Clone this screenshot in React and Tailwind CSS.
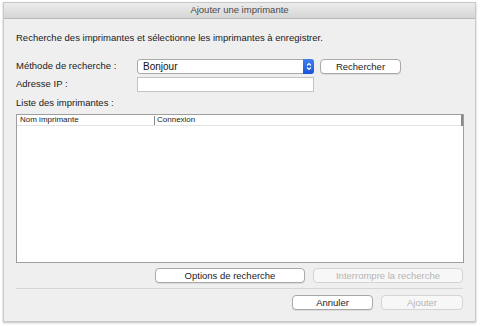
import React from 'react';

const Btn = ({ children, disabled, className = '' }) => (
    <div
        className={`h-[15px] flex items-center justify-center rounded-[4px] border text-[9.5px] leading-none ${
            disabled ? 'border-[#d4d4d4] bg-[#f7f7f7] text-[#b5b5b5]' : 'border-[#a9a9a9] bg-white text-[#222] shadow-[0_1px_0_rgba(0,0,0,0.08)]'
        } ${className}`}
    >
        {children}
    </div>
);

export default function App() {
    return (
        <div className="w-[480px] h-[326px] bg-white pt-[2px] pl-[3px] pr-[4px] pb-[4px]" style={{ fontFamily: '"Liberation Sans", Arial, sans-serif' }}>
            <div className="h-full flex flex-col border border-[#c8c8c8] bg-[#efefef] shadow-[0_1px_2px_rgba(0,0,0,0.25)]">
                {/* barre de titre */}
                <div className="h-[16px] flex items-center justify-center bg-gradient-to-b from-[#ececec] to-[#d6d6d6] border-b border-[#b9b9b9] text-[9.5px] text-[#4a4a4a]">
                    Ajouter une imprimante
                </div>

                <div className="flex-1 flex flex-col px-[12px]">
                    <div className="mt-[12px] h-[14px] flex items-center text-[9.5px] text-[#1a1a1a]">
                        Recherche des imprimantes et sélectionne les imprimantes à enregistrer.
                    </div>

                    <div className="mt-[14px] flex items-center">
                        <div className="w-[121px] text-[9.5px] text-[#1a1a1a]">Méthode de recherche :</div>
                        <div className="w-[177px] h-[15px] flex items-center border border-[#a9a9a9] rounded-[3px] bg-white">
                            <span className="flex-1 pl-[5px] text-[10px] text-[#111]">Bonjour</span>
                            <span className="w-[11px] h-[15px] -mr-px rounded-r-[3px] bg-gradient-to-b from-[#3f7ff0] to-[#1a56d8] flex flex-col items-center justify-center gap-[1px]">
                                <svg width="6" height="9" viewBox="0 0 6 9" fill="none" stroke="white" strokeWidth="1.1">
                                    <path d="M1 3.5 L3 1.5 L5 3.5" />
                                    <path d="M1 5.5 L3 7.5 L5 5.5" />
                                </svg>
                            </span>
                        </div>
                        <Btn className="ml-[6px] w-[81px]">Rechercher</Btn>
                    </div>

                    <div className="mt-[3px] flex items-center">
                        <div className="w-[121px] text-[9.5px] text-[#1a1a1a]">Adresse IP :</div>
                        <div className="w-[177px] h-[15px] border border-[#c3c3c3] bg-white"></div>
                    </div>

                    <div className="mt-[4px] h-[14px] flex items-center text-[9.5px] text-[#1a1a1a]">Liste des imprimantes :</div>

                    <div className="mt-[4px] h-[149px] flex flex-col border border-[#9e9e9e] bg-white mr-[-1px]">
                        <div className="h-[11px] flex items-center text-[8px] text-[#1a1a1a] border-b border-[#e2e2e2]">
                            <span className="w-[137px] pl-[3px]">Nom imprimante</span>
                            <span className="h-[9px] border-l border-[#8a8a8a] pl-[2px] flex items-center flex-1">Connexion</span>
                            <span className="h-[11px] w-[2px] bg-[#8a8a8a]"></span>
                        </div>
                    </div>

                    <div className="mt-[5px] flex justify-end gap-[8px]">
                        <Btn className="w-[150px]">Options de recherche</Btn>
                        <Btn disabled className="w-[150px]">Interrompre la recherche</Btn>
                    </div>

                    <div className="mt-[5px] h-px bg-[#d6d6d6]"></div>

                    <div className="mt-[6px] flex justify-end gap-[8px]">
                        <Btn className="w-[81px]">Annuler</Btn>
                        <Btn disabled className="w-[82px]">Ajouter</Btn>
                    </div>
                </div>
            </div>
        </div>
    );
}
